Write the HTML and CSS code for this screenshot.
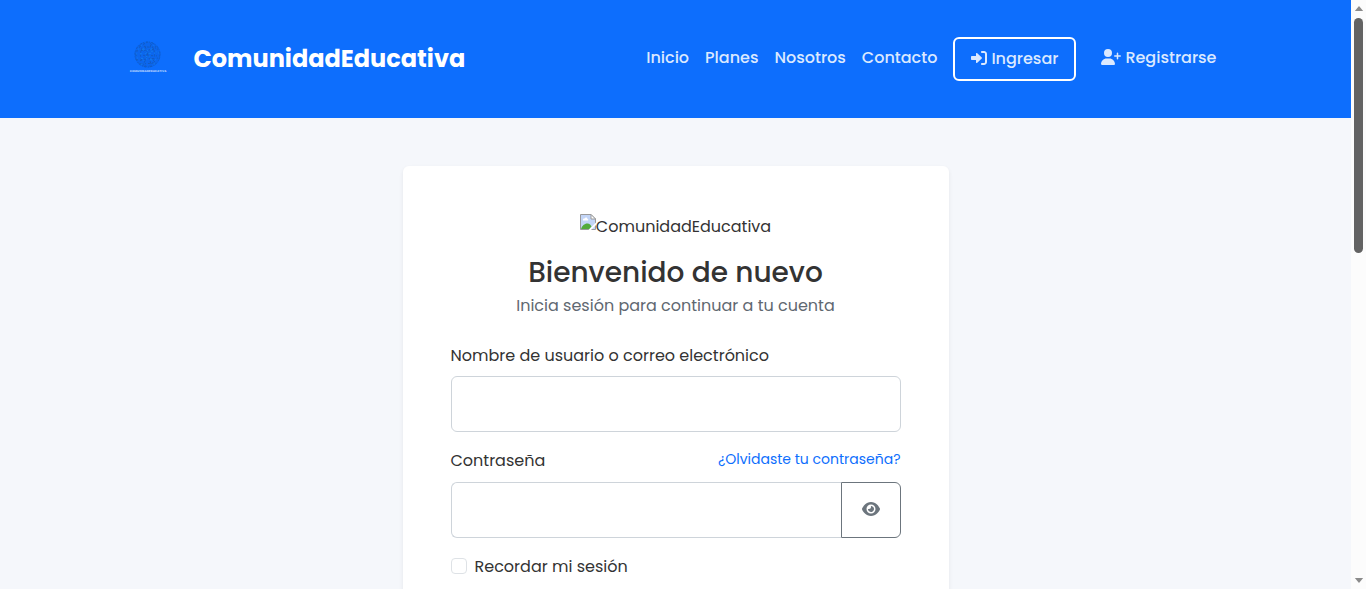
FILE: index.html
```html
<!DOCTYPE html>
<html lang="es">
<head>
<meta charset="utf-8">
<meta name="viewport" content="width=device-width, initial-scale=1">
<title>ComunidadEducativa</title>
<link rel="stylesheet" href="styles.css">
</head>
<body>
<div class="viewport">
  <div class="page">
    <header class="header">
      <div class="header-inner">
        <a class="brand" href="#">
          <svg class="brand-logo" viewBox="0 0 40 40" aria-hidden="true">
            <circle cx="19.5" cy="15.500" r="13" fill="#0c67ee"/>
            <g fill="none" stroke="#1556ae" stroke-width="1" opacity=".65">
              <circle cx="19.5" cy="15.500" r="12.5" stroke-dasharray="1 2 2 1"/>
              <ellipse cx="19.5" cy="15.500" rx="7" ry="12" stroke-dasharray="2 2 1 3"/>
              <path stroke-dasharray="2 3 1 2" d="M11 7L28 9M8 12L31 10M7 16L32 17M8 21L31 19M12 25L28 24"/>
              <path stroke-dasharray="1 2 3 2" d="M11 8L28 24M28 7L11 23M16 4L24 28M24 3L15 27"/>
            </g>
            <g fill="none" stroke="#1684ee" stroke-width="1" stroke-dasharray="1 3 2 3" opacity=".7">
              <path d="M10 10L29 13M8 15L31 14M9 19L31 21M13 6L27 26M26 6L13 26"/>
            </g>
            <text class="logo-caption" x="20" y="33" text-anchor="middle">COMUNIDADEDUCATIVA</text>
          </svg>
          <span>ComunidadEducativa</span>
        </a>
        <nav class="nav">
          <a href="#">Inicio</a>
          <a href="#">Planes</a>
          <a href="#">Nosotros</a>
          <a href="#">Contacto</a>
          <a class="login" href="#">
            <svg class="icon-login" viewBox="0 0 512 512" aria-hidden="true"><path d="M344.7 238.5l-144.1-136C193.7 95.97 183.4 94.17 174.6 97.95C165.8 101.8 160.1 110.4 160.1 120V192H32.02C14.33 192 0 206.3 0 224v64c0 17.68 14.33 32 32.02 32h128.1v72c0 9.578 5.707 18.25 14.51 22.05c8.803 3.781 19.03 1.984 26-4.594l144.1-136C354.3 264.4 354.3 247.6 344.7 238.5zM416 32h-64c-17.67 0-32 14.33-32 32s14.33 32 32 32h64c17.67 0 32 14.33 32 32v256c0 17.67-14.33 32-32 32h-64c-17.67 0-32 14.33-32 32s14.33 32 32 32h64c53.02 0 96-42.98 96-96V128C512 74.98 469 32 416 32z"/></svg>
            <span>Ingresar</span>
          </a>
          <a class="register" href="#">
            <svg class="icon-register" viewBox="0 0 640 512" aria-hidden="true"><path d="M96 128a128 128 0 1 1 256 0A128 128 0 1 1 96 128zM0 482.3C0 383.8 79.8 304 178.3 304l91.4 0C368.2 304 448 383.8 448 482.3c0 16.4-13.3 29.7-29.7 29.7L29.7 512C13.3 512 0 498.7 0 482.3zM504 312l0-64-64 0c-13.3 0-24-10.7-24-24s10.7-24 24-24l64 0 0-64c0-13.3 10.7-24 24-24s24 10.7 24 24l0 64 64 0c13.3 0 24 10.7 24 24s-10.7 24-24 24l-64 0 0 64c0 13.3-10.7 24-24 24s-24-10.7-24-24z"/></svg>
            <span>Registrarse</span>
          </a>
        </nav>
      </div>
    </header>
    <main class="main">
      <section class="card">
        <div class="card-logo">
          <svg class="icon-image" viewBox="0 0 16 16" aria-hidden="true">
            <path d="M.5.5H11L15.500 5V15.500H.5Z" fill="#c3d5f7"/>
            <path d="M3 6.500C2.500 4.800 4 4.300 4.600 4.600C5.200 3 7.500 3.500 7.400 5C8.600 5 8.500 6.500 7.800 6.500Z" fill="#fff"/>
            <path d="M1 15C2 11.500 5 9 8 9.500C10 10 11 11.500 11.500 12.500L9 15.500H1Z" fill="#53ab3c"/>
            <path d="M.5 15.500V.5H11L15.500 5V15.500Z" fill="none" stroke="#9a9a9a"/>
            <path d="M11 .5V5H15.500Z" fill="#fff" stroke="#9a9a9a"/>
            <path d="M8.500 16L16 8.500V11L11 16Z" fill="#fff"/>
          </svg>
          <span>ComunidadEducativa</span>
        </div>
        <h1>Bienvenido de nuevo</h1>
        <p class="subtitle">Inicia sesión para continuar a tu cuenta</p>
        <form>
          <label class="label" for="user">Nombre de usuario o correo electrónico</label>
          <input class="field" id="user" type="text">
          <div class="label-row">
            <label for="password">Contraseña</label>
            <a href="#">¿Olvidaste tu contraseña?</a>
          </div>
          <div class="password-group">
            <input class="field" id="password" type="password">
            <button class="toggle" type="button" aria-label="Mostrar contraseña">
              <svg class="icon-eye" viewBox="0 0 576 512" aria-hidden="true"><path d="M288 32c-80.8 0-145.500 36.800-192.600 80.600C48.600 156 17.300 208 2.500 243.700c-3.300 7.900-3.300 16.700 0 24.600C17.300 304 48.600 356 95.400 399.400C142.500 443.200 207.200 480 288 480s145.500-36.800 192.600-80.600c46.800-43.500 78.100-95.400 93-131.100c3.300-7.900 3.300-16.700 0-24.600c-14.900-35.700-46.200-87.700-93-131.100C433.500 68.800 368.800 32 288 32zM144 256a144 144 0 1 1 288 0 144 144 0 1 1 -288 0zm144-64c0 35.300-28.700 64-64 64c-7.100 0-13.900-1.200-20.300-3.300c-5.500-1.800-11.900 1.600-11.700 7.400c.3 6.900 1.300 13.800 3.200 20.700c13.700 51.200 66.400 81.600 117.600 67.900s81.600-66.400 67.900-117.600c-11.100-41.500-47.800-69.400-88.600-71.100c-5.800-.2-9.200 6.100-7.400 11.700c2.100 6.400 3.300 13.200 3.300 20.300z"/></svg>
            </button>
          </div>
          <div class="remember">
            <input id="remember" type="checkbox">
            <label for="remember">Recordar mi sesión</label>
          </div>
        </form>
      </section>
    </main>
  </div>
  <div class="scrollbar" aria-hidden="true">
    <svg class="arrow" viewBox="0 0 10 6"><path d="M5 0L10 6H0Z"/></svg>
    <div class="track"><div class="thumb"></div></div>
    <svg class="arrow" viewBox="0 0 10 6"><path d="M0 0H10L5 6Z"/></svg>
  </div>
</div>
</body>
</html>
```
FILE: styles.css
```css
* { box-sizing: border-box; }

body {
  margin: 0;
  background: #f5f7fb;
  color: #333;
  font-family: Poppins, Inter, "Open Sans", sans-serif;
  font-size: 16px;
  line-height: 26px;
}

a { text-decoration: none; }

.viewport {
  display: flex;
  height: 100vh;
  overflow: hidden;
}

.page {
  flex: 1;
  min-width: 0;
  overflow: hidden;
}

.header {
  background: #0d6efd;
  padding: 37px 16px;
}

.header-inner {
  display: flex;
  align-items: center;
  justify-content: space-between;
  max-width: 1096px;
  min-height: 44px;
  margin: 0 auto;
}

.brand {
  display: flex;
  align-items: center;
  gap: 26px;
  color: #fff;
  font-size: 24px;
  font-weight: 700;
}

.brand-logo {
  width: 40px;
  height: 40px;
}

.logo-caption {
  fill: #fff;
  fill-opacity: 0.65;
  font-size: 3px;
  font-weight: 700;
}

.nav {
  display: flex;
  align-items: flex-start;
  gap: 16px;
  padding-right: 7px;
}

.nav a {
  padding: 8px 0;
  color: #dbe9ff;
  font-weight: 500;
}

.nav svg {
  margin-top: 4px;
  fill: currentColor;
}

.nav .login,
.nav .register {
  display: flex;
  align-items: flex-start;
  gap: 4px;
}

.nav .login {
  padding: 7px 16px;
  border: 2px solid #fff;
  border-radius: 6px;
}

.nav .register { margin-left: 9px; }

.icon-login {
  width: 16px;
  height: 16px;
}

.icon-register {
  width: 20px;
  height: 16px;
}

.main {
  padding: 48px 16px;
}

.card {
  max-width: 546px;
  margin: 0 auto;
  padding: 48px;
  background: #fff;
  border-radius: 6px;
  box-shadow: 0 2px 4px rgba(0, 0, 0, 0.075);
}

.card-logo {
  display: flex;
  justify-content: center;
}

.icon-image {
  width: 16px;
  height: 16px;
}

h1 {
  margin: 16px 0 3px;
  font-size: 28px;
  font-weight: 500;
  line-height: 34px;
  text-align: center;
}

.subtitle {
  margin: 0 0 24px;
  color: #5f6871;
  text-align: center;
}

.label {
  display: block;
  margin: 0 0 7px;
}

.field {
  display: block;
  width: 100%;
  height: 56px;
  padding: 12px 16px;
  border: 1px solid #ced4da;
  border-radius: 6px;
  background: #fff;
  font: inherit;
}

.label-row {
  display: flex;
  justify-content: space-between;
  margin: 16px 0 8px;
}

.label-row a {
  color: #0d6efd;
  font-size: 14px;
  line-height: 22px;
}

.password-group {
  display: flex;
}

.password-group .field {
  flex: 1;
  min-width: 0;
  border-right: 0;
  border-radius: 6px 0 0 6px;
}

.toggle {
  display: flex;
  align-items: center;
  justify-content: center;
  width: 60px;
  padding: 0 6px 2px;
  border: 1px solid #6c757d;
  border-radius: 0 6px 6px 0;
  background: #fff;
  color: #6c757d;
}

.icon-eye {
  width: 18px;
  height: 16px;
  fill: currentColor;
}

.remember {
  display: flex;
  align-items: flex-start;
  gap: 8px;
  margin: 16px 0 180px;
}

.remember input {
  appearance: none;
  width: 16px;
  height: 16px;
  margin: 4px 0;
  border: 1px solid #dee2e6;
  border-radius: 4px;
  background: #fff;
}

.scrollbar {
  display: flex;
  flex-direction: column;
  align-items: center;
  gap: 7px;
  width: 15px;
  padding: 6px 0;
  background: #fcfcfc;
}

.arrow {
  width: 10px;
  height: 5px;
  fill: #8b8b8b;
}

.track {
  flex: 1;
  width: 9px;
}

.thumb {
  height: 42.5%;
  border-radius: 5px;
  background: #636363;
}
```
